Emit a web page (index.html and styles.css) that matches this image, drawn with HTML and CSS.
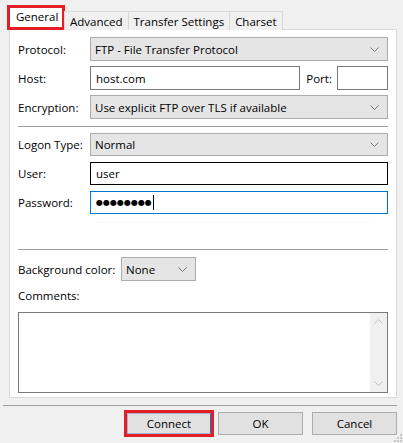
FILE: index.html
```html
<!DOCTYPE html>
<html>
<head>
<meta charset="utf-8">
<link rel="stylesheet" href="styles.css">
</head>
<body>
<div class="dialog">
  <div class="tabs">
    <div class="tab active">General</div>
    <div class="tab">Advanced</div>
    <div class="tab">Transfer Settings</div>
    <div class="tab">Charset</div>
  </div>
  <div class="panel">
    <div class="row r-protocol">
      <span class="label">Protocol:</span>
      <div class="select grow"><span>FTP - File Transfer Protocol</span><svg class="chev" width="9" height="5" viewBox="0 0 9 5"><polyline points="0.5,0.5 4.5,4.5 8.5,0.5" fill="none" stroke="#7a7a7a" stroke-width="1"/></svg></div>
    </div>
    <div class="row r-host">
      <span class="label">Host:</span>
      <div class="input host">host.com</div>
      <span class="port-label">Port:</span>
      <div class="input port"></div>
    </div>
    <div class="row r-enc">
      <span class="label">Encryption:</span>
      <div class="select grow"><span>Use explicit FTP over TLS if available</span><svg class="chev" width="9" height="5" viewBox="0 0 9 5"><polyline points="0.5,0.5 4.5,4.5 8.5,0.5" fill="none" stroke="#7a7a7a" stroke-width="1"/></svg></div>
    </div>
    <div class="sep sep1"></div>
    <div class="row r-logon">
      <span class="label">Logon Type:</span>
      <div class="select grow"><span>Normal</span><svg class="chev" width="9" height="5" viewBox="0 0 9 5"><polyline points="0.5,0.5 4.5,4.5 8.5,0.5" fill="none" stroke="#7a7a7a" stroke-width="1"/></svg></div>
    </div>
    <div class="row r-user">
      <span class="label">User:</span>
      <div class="input grow user">user</div>
    </div>
    <div class="row r-pass">
      <span class="label">Password:</span>
      <div class="input grow pass"><span class="dots">●●●●●●●●</span><span class="caret"></span></div>
    </div>
    <div class="ghost"></div>
    <div class="sep sep2"></div>
    <div class="row r-bg">
      <span class="bg-label">Background color:</span>
      <div class="select bgsel"><span>None</span><svg class="chev" width="9" height="5" viewBox="0 0 9 5"><polyline points="0.5,0.5 4.5,4.5 8.5,0.5" fill="none" stroke="#7a7a7a" stroke-width="1"/></svg></div>
    </div>
    <div class="comments-label">Comments:</div>
    <div class="textarea">
      <div class="scroll">
        <svg width="9" height="5" viewBox="0 0 9 5"><polyline points="0.5,4.5 4.5,0.5 8.5,4.5" fill="none" stroke="#c2c2c2" stroke-width="1"/></svg>
        <svg width="9" height="5" viewBox="0 0 9 5"><polyline points="0.5,0.5 4.5,4.5 8.5,0.5" fill="none" stroke="#c2c2c2" stroke-width="1"/></svg>
      </div>
    </div>
  </div>
  <div class="footer-sep"></div>
  <div class="buttons">
    <div class="hl"><div class="btn connect">Connect</div></div>
    <div class="btn">OK</div>
    <div class="btn">Cancel</div>
  </div>
  <svg class="grip" width="8" height="8" viewBox="0 0 8 8">
    <rect x="6" y="0" width="2" height="2" fill="#c8c8c8"/>
    <rect x="3" y="3" width="2" height="2" fill="#c8c8c8"/>
    <rect x="6" y="3" width="2" height="2" fill="#c8c8c8"/>
    <rect x="0" y="6" width="2" height="2" fill="#c8c8c8"/>
    <rect x="3" y="6" width="2" height="2" fill="#c8c8c8"/>
    <rect x="6" y="6" width="2" height="2" fill="#c8c8c8"/>
  </svg>
</div>
</body>
</html>
```
FILE: styles.css
```css
* { box-sizing: border-box; }
html, body { margin: 0; padding: 0; }
body {
  background: #f0f0f0;
  font-family: "Open Sans", "Noto Sans", sans-serif;
  font-size: 11.5px;
  color: #000;
  width: 403px;
  height: 443px;
  overflow: hidden;
}
.dialog {
  position: relative;
  width: 403px;
  height: 443px;
  padding-top: 5px;
}
.tabs {
  display: flex;
  align-items: flex-end;
  margin-left: 7px;
  height: 25px;
  position: relative;
  z-index: 2;
}
.tab {
  height: 19px;
  padding: 0 5px;
  border: 1px solid #d9d9d9;
  border-bottom: none;
  margin-left: -1px;
  display: flex;
  align-items: center;
  background: #f0f0f0;
}
.tab.active {
  height: 25px;
  margin-left: 0;
  background: #fff;
  border: 3px solid #e31e26;
  border-bottom: 3px solid #e31e26;
  padding: 0 6px 2px 6px;
  width: 58px;
}
.panel {
  margin: -1px 6px 0 9px;
  height: 369px;
  background: #fff;
  border: 1px solid #d9d9d9;
  padding: 7px 8px 0 8px;
  display: flex;
  flex-direction: column;
}
.row {
  display: flex;
  align-items: center;
}
.label { width: 72px; flex: none; }
.grow { flex: 1; }
.select {
  height: 24px;
  background: #e5e5e5;
  border: 1px solid #acacac;
  display: flex;
  align-items: center;
  justify-content: space-between;
  padding: 0 8px 0 4px;
}
.chev { flex: none; }
.input {
  height: 24px;
  background: #fff;
  border: 1px solid #7a7a7a;
  display: flex;
  align-items: center;
  padding: 0 5px;
}
.host { width: 211px; }
.port-label { width: 37px; padding-left: 6px; }
.port { width: 51px; }
.r-host { margin-top: 5px; }
.r-enc { margin-top: 5px; }
.sep { height: 1px; background: #a0a0a0; }
.sep1 { margin-top: 7px; }
.r-logon { margin-top: 6px; }
.r-logon .select { height: 23px; }
.r-user { margin-top: 6px; }
.user { border-color: #000; height: 23px; }
.r-pass { margin-top: 6px; }
.pass { border-color: #0078d7; height: 23px; padding-left: 5px; }
.dots { font-family: "DejaVu Sans", sans-serif; font-size: 8px; letter-spacing: 0; }
.caret { width: 1px; height: 15px; background: #000; margin-left: 1px; }
.ghost {
  margin: 8px 18px 0 80px;
  height: 1px;
  background: #f6f6f6;
}
.sep2 { margin-top: 26px; }
.r-bg { margin-top: 7px; }
.bg-label { width: 103px; flex: none; }
.bgsel { width: 75px; height: 24px; padding-right: 8px; }
.comments-label { margin-top: 6px; height: 18px; line-height: 18px; }
.textarea {
  margin-top: 7px;
  height: 81px;
  border: 1px solid #7a7a7a;
  background: #fff;
  display: flex;
  justify-content: flex-end;
}
.scroll {
  width: 17px;
  background: #f0f0f0;
  display: flex;
  flex-direction: column;
  justify-content: space-between;
  align-items: center;
  padding: 6px 0 6px 0;
}
.footer-sep {
  margin: 7px 6px 0 3px;
  height: 1px;
  background: #a0a0a0;
}
.buttons {
  display: flex;
  justify-content: flex-end;
  align-items: center;
  margin: 4px 6px 0 0;
  gap: 9px;
}
.btn {
  width: 85px;
  height: 23px;
  background: #e1e1e1;
  border: 1px solid #adadad;
  display: flex;
  align-items: center;
  justify-content: center;
}
.hl {
  border: 3px solid #e31e26;
  margin-right: -5px;
}
.btn.connect {
  width: 84px;
  height: 21px;
  border: 1px solid #a0b4d0;
  border-right-color: #0078d7;
}
.grip { position: absolute; right: 1px; bottom: 1px; }
```
